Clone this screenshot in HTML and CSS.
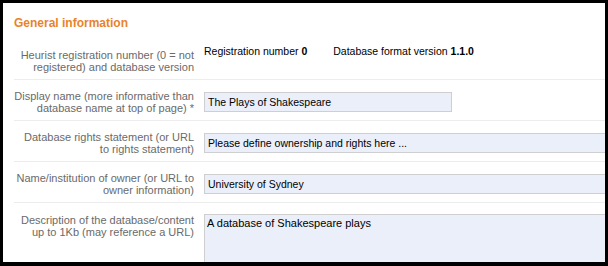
FILE: index.html
```html
<!DOCTYPE html>
<html lang="en">
<head>
    <meta charset="UTF-8">
    <meta name="viewport" content="width=device-width, initial-scale=1.0">
    <title>Database properties - Heurist</title>
    <link rel="stylesheet" href="styles.css">
</head>
<body>
    <div class="frame">
        <h2 class="section-title">General information</h2>

        <div class="prop-row prop-row-first">
            <div class="prop-label">Heurist registration number (0 = not registered) and database version</div>
            <div class="prop-value">
                <span class="reg-number">Registration number <b>0</b></span>
                <span>Database format version <b>1.1.0</b></span>
            </div>
        </div>

        <div class="prop-row">
            <div class="prop-label">Display name (more informative than database name at top of page) *</div>
            <div class="prop-value">
                <input type="text" class="text-input short" value="The Plays of Shakespeare">
            </div>
        </div>

        <div class="prop-row">
            <div class="prop-label">Database rights statement (or URL to rights statement)</div>
            <div class="prop-value">
                <input type="text" class="text-input wide" value="Please define ownership and rights here ...">
            </div>
        </div>

        <div class="prop-row">
            <div class="prop-label">Name/institution of owner (or URL to owner information)</div>
            <div class="prop-value">
                <input type="text" class="text-input wide" value="University of Sydney">
            </div>
        </div>

        <div class="prop-row prop-row-top">
            <div class="prop-label">Description of the database/content up to 1Kb (may reference a URL)</div>
            <div class="prop-value">
                <textarea class="text-area">A database of Shakespeare plays</textarea>
            </div>
        </div>
    </div>
</body>
</html>
```

FILE: styles.css
```css
body {
    margin: 0;
    padding: 3px 3px 4px 3px;
    background-color: #000;
    font-family: "Liberation Sans", Arial, sans-serif;
}
.frame {
    height: 259px;
    background-color: #fff;
    overflow: hidden;
    padding: 13px 0 0 11px;
    box-sizing: border-box;
}
.section-title {
    margin: 0 0 5px 0;
    font-size: 12px;
    font-weight: bold;
    color: #e8832a;
}
.prop-row {
    display: grid;
    grid-template-columns: 180px 1fr;
    column-gap: 10px;
    align-items: center;
    padding: 10px 0 6px 0;
    border-bottom: 1px solid #ececec;
}
.prop-row-first {
    align-items: start;
}
.prop-row-first .prop-label {
    margin-top: 4px;
}
.prop-row-top {
    align-items: start;
    padding-top: 11px;
    border-bottom: none;
}
.prop-label {
    font-size: 11px;
    line-height: 12px;
    color: #6a6a6a;
    text-align: right;
}
.prop-value {
    font-size: 10.5px;
    color: #000;
    white-space: nowrap;
}
.reg-number {
    margin-right: 23px;
}
.text-input {
    height: 20px;
    box-sizing: border-box;
    padding: 0 3px;
    border: 1px solid #cfcfcf;
    background-color: #ebeff9;
    font-family: "Liberation Sans", Arial, sans-serif;
    font-size: 10.5px;
    color: #000;
    outline: none;
}
.text-input.short {
    width: 248px;
}
.text-input.wide {
    width: 500px;
}
.text-area {
    display: block;
    width: 500px;
    height: 80px;
    box-sizing: border-box;
    padding: 2px;
    border: 1px solid #cfcfcf;
    background-color: #ebeff9;
    font-family: "Liberation Sans", Arial, sans-serif;
    font-size: 11px;
    color: #000;
    resize: none;
    outline: none;
}
```
